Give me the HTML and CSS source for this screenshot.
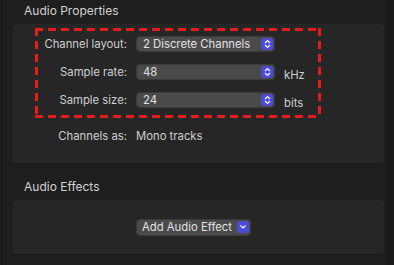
FILE: index.html
```html
<!DOCTYPE html>
<html lang="en">
<head>
  <meta charset="UTF-8">
  <title>Audio Properties</title>
  <link rel="stylesheet" href="styles.css">
</head>
<body>
  <div class="inspector">
    <h2 class="section-title">Audio Properties</h2>
    <div class="panel panel-props">
      <div class="highlight">
        <div class="row">
          <span class="label">Channel layout:</span>
          <div class="popup"><span>2 Discrete Channels</span><span class="stepper"><svg width="7" height="10" viewBox="0 0 7 10"><path d="M1 4 L3.5 1.5 L6 4 M1 6 L3.5 8.5 L6 6" fill="none" stroke="#fff" stroke-width="1.1"/></svg></span></div>
        </div>
        <div class="row">
          <span class="label">Sample rate:</span>
          <div class="popup"><span>48</span><span class="stepper"><svg width="7" height="10" viewBox="0 0 7 10"><path d="M1 4 L3.5 1.5 L6 4 M1 6 L3.5 8.5 L6 6" fill="none" stroke="#fff" stroke-width="1.1"/></svg></span></div>
          <span class="unit">kHz</span>
        </div>
        <div class="row">
          <span class="label">Sample size:</span>
          <div class="popup"><span>24</span><span class="stepper"><svg width="7" height="10" viewBox="0 0 7 10"><path d="M1 4 L3.5 1.5 L6 4 M1 6 L3.5 8.5 L6 6" fill="none" stroke="#fff" stroke-width="1.1"/></svg></span></div>
          <span class="unit">bits</span>
        </div>
      </div>
      <div class="row row-plain">
        <span class="label">Channels as:</span>
        <span class="value">Mono tracks</span>
      </div>
    </div>
    <h2 class="section-title">Audio Effects</h2>
    <div class="panel panel-effects">
      <div class="button"><span>Add Audio Effect</span><span class="stepper"><svg width="8" height="6" viewBox="0 0 8 6"><path d="M1.5 1.5 L4 4 L6.5 1.5" fill="none" stroke="#fff" stroke-width="1.1"/></svg></span></div>
    </div>
  </div>
</body>
</html>
```

FILE: styles.css
```css
html, body {
  margin: 0;
  padding: 0;
  background: #1a1a1a;
}

body {
  font-family: Inter, "Noto Sans", sans-serif;
  font-size: 11.3px;
  color: #d6d6d6;
  width: 394px;
  height: 265px;
  overflow: hidden;
}

.inspector {
  margin-left: 3px;
  width: 382px;
  height: 265px;
  background: #1e1e1e;
  padding: 0 0 0 10px;
  box-sizing: border-box;
}

.section-title {
  margin: 0;
  padding: 3px 0 0 11px;
  height: 24px;
  box-sizing: border-box;
  font-size: 12px;
  font-weight: 400;
  color: #d2d2d2;
}

.panel {
  background: #262626;
  border-radius: 3px;
  width: 371px;
}

.panel-props {
  height: 139px;
  padding: 4px 0 0 22px;
  box-sizing: border-box;
  margin-bottom: 13px;
}

.highlight {
  width: 286px;
  height: 90px;
  box-sizing: border-box;
  padding: 8px 0 0 0;
  background-image:
    repeating-linear-gradient(90deg, #e41c1c 0 8px, transparent 8px 13px),
    repeating-linear-gradient(90deg, #e41c1c 0 8px, transparent 8px 13px),
    repeating-linear-gradient(180deg, #e41c1c 0 8px, transparent 8px 13px),
    repeating-linear-gradient(180deg, #e41c1c 0 8px, transparent 8px 13px);
  background-size: 100% 3px, 100% 3px, 3px 100%, 3px 100%;
  background-position: 0 0, 0 100%, 0 0, 100% 0;
  background-repeat: no-repeat;
}

.row {
  display: flex;
  align-items: center;
  height: 16px;
  margin-bottom: 12px;
}

.label {
  width: 92px;
  text-align: right;
  margin-right: 9px;
  color: #cfcfcf;
}

.popup {
  width: 139px;
  height: 16px;
  box-sizing: border-box;
  background: #4a4a4a;
  border: 1px solid #3a3a3a;
  border-radius: 4px;
  display: flex;
  align-items: center;
  justify-content: space-between;
  padding: 0 1px 0 6px;
  color: #e2e2e2;
}

.stepper {
  width: 12px;
  height: 12px;
  background: #4b4bd9;
  border-radius: 3px;
  display: flex;
  align-items: center;
  justify-content: center;
}

.unit {
  margin-left: 9px;
  margin-top: 5px;
  color: #cfcfcf;
}

.row-plain {
  margin-top: 10px;
}

.row-plain .value {
  color: #cfcfcf;
}

.panel-effects {
  height: 54px;
  display: flex;
  align-items: center;
  padding-left: 123px;
  box-sizing: border-box;
}

.button {
  height: 17px;
  box-sizing: border-box;
  background: #4a4a4a;
  border: 1px solid #3a3a3a;
  border-radius: 4px;
  display: flex;
  align-items: center;
  gap: 5px;
  padding: 0 1px 0 5px;
  color: #e2e2e2;
}
```
